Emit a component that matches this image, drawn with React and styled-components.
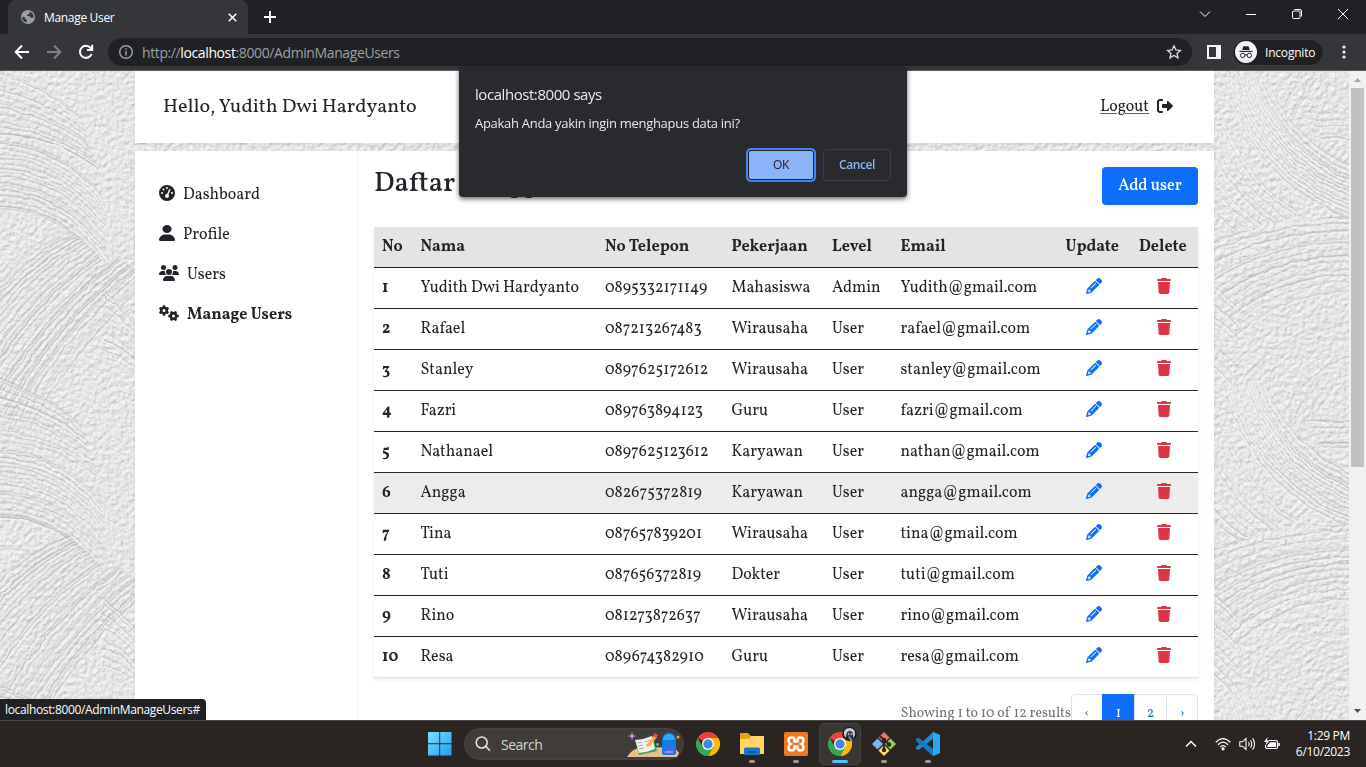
import React from 'react';
import styled, { createGlobalStyle, css } from 'styled-components';
import { FaGaugeHigh, FaUser, FaUsers, FaGears, FaPencil, FaTrash } from 'react-icons/fa6';

const serif = '"Vollkorn", "Liberation Serif", serif';
const sans = '"Segoe UI", "Open Sans", "Noto Sans", sans-serif';

const GlobalStyle = createGlobalStyle`
  *, *::before, *::after { box-sizing: border-box; }
  body { margin: 0; overflow: hidden; background: #202124; }
  svg { display: block; flex: none; }
`;

/* ---------- browser window ---------- */

const Desktop = styled.div`
  position: relative;
  width: 1366px;
  height: 767px;
  display: flex;
  flex-direction: column;
  overflow: hidden;
  font-family: ${sans};
`;

const TabStrip = styled.div`
  display: flex;
  align-items: flex-start;
  height: 34px;
  padding-left: 8px;
  background: #202124;
  color: #fff;
`;

const Tab = styled.div`
  display: flex;
  align-items: center;
  width: 240px;
  height: 34px;
  padding: 0 11px 0 13px;
  border-radius: 8px 8px 0 0;
  background: #35363a;
  font-size: 12px;
  letter-spacing: -0.32px;
`;

const TabTitle = styled.span`
  flex: 1;
  margin-left: 9px;
`;

const NewTab = styled.div`
  margin: 11px 0 0 16px;
`;

const WindowControls = styled.div`
  display: flex;
  align-items: center;
  gap: 34px;
  height: 28px;
  margin-left: auto;
  padding-right: 17px;
`;

const Toolbar = styled.div`
  display: flex;
  align-items: center;
  height: 37px;
  padding: 0 14px;
  background: #35363a;
  border-bottom: 1px solid #5b5960;
`;

const NavButtons = styled.div`
  display: flex;
  gap: 16px;
  width: 94px;
`;

const AddressBar = styled.div`
  display: flex;
  align-items: center;
  width: 1084px;
  height: 28px;
  padding: 0 10px;
  border-radius: 14px;
  background: #202124;
  color: #9aa0a6;
  font-size: 14px;
  letter-spacing: -0.39px;
`;

const Url = styled.span`
  flex: 1;
  margin-left: 8px;
  b { color: #fff; font-weight: 400; }
`;

const Incognito = styled.div`
  display: flex;
  align-items: center;
  gap: 8px;
  width: 92px;
  height: 27px;
  margin: 0 18px 0 11px;
  padding-left: 2px;
  border: 1px solid #3c3d41;
  border-radius: 14px;
  background: #202124;
  color: #fff;
  font-size: 12px;
  letter-spacing: -0.2px;
`;

const SidePanelIcon = styled.div`
  width: 14px;
  height: 14px;
  margin-left: 15px;
  border: 2px solid #f1f3f4;
  border-right-width: 5px;
`;

const Viewport = styled.div`
  position: relative;
  display: flex;
  height: 649px;
  overflow: hidden;
  background: #e3e3e3;
`;

const Wall = styled.svg`
  position: absolute;
  top: 0;
  left: 0;
`;

const Scrollbar = styled.div`
  position: relative;
  display: flex;
  flex-direction: column;
  align-items: center;
  justify-content: space-between;
  width: 17px;
  margin-left: auto;
  padding: 7px 0;
  background: #f1f1f1;
`;

const Thumb = styled.div`
  width: 13px;
  height: 379px;
  margin: 6px 0 auto;
  background: #c1c1c1;
`;

/* ---------- page ---------- */

const Page = styled.div`
  position: relative;
  display: flex;
  flex-direction: column;
  gap: 8px;
  width: 1079px;
  margin-left: 135px;
  font-family: ${serif};
  font-size: 16px;
  color: #212529;
`;

const Card = styled.section`
  display: flex;
  flex: none;
  background: #fff;
  box-shadow: 0 2px 4px rgba(0, 0, 0, 0.075);
`;

const Header = styled(Card)`
  align-items: center;
  justify-content: space-between;
  height: 72px;
  padding: 0 41px 0 28px;
`;

const Greeting = styled.span`
  font-size: 20px;
`;

const Logout = styled.span`
  display: flex;
  align-items: center;
  gap: 8px;
  svg { margin-bottom: 3px; }
  span {
    text-decoration: underline 1px #0d6efd;
    text-underline-offset: 2px;
  }
`;

const Body = styled(Card)`
  height: 600px;
`;

const Sidebar = styled.nav`
  display: flex;
  flex-direction: column;
  gap: 16px;
  width: 223px;
  padding: 32px 24px;
  border-right: 1px solid #f5f5f5;
`;

const NavItem = styled.div`
  display: flex;
  align-items: center;
  gap: 8px;
  height: 24px;
  font-weight: ${(p) => (p.$active ? 700 : 400)};
  svg { margin-bottom: 4px; }
`;

const Main = styled.main`
  flex: 1;
  padding: 16px 16px 0 16px;
`;

const TitleRow = styled.div`
  display: flex;
  justify-content: space-between;
  height: 60px;
`;

const Title = styled.h1`
  margin: 0;
  font-size: 28px;
  font-weight: 500;
  line-height: 34px;
`;

const AddButton = styled.button`
  width: 96px;
  height: 38px;
  padding: 0;
  border: 0;
  border-radius: 4px;
  background: #0d6efd;
  color: #fff;
  font-family: inherit;
  font-size: 16px;
  font-weight: 500;
`;

const Table = styled.div`
  box-shadow: 0 2px 4px rgba(0, 0, 0, 0.075);
  border-bottom: 1px solid #dee2e6;
`;

const Row = styled.div`
  display: grid;
  grid-template-columns: 38.5px 184.5px 126.5px 100.5px 68.5px 165px 73.5px 66px;
  align-items: center;
  height: 41px;
  border-bottom: 1px solid #212529;
  background: ${(p) => p.$bg || '#fff'};
  &:last-child { height: 40px; border-bottom: 0; }
`;

const HeadRow = styled(Row)`
  background: #e4e4e4;
  font-weight: 700;
`;

const Cell = styled.span`
  padding-left: 8px;
  white-space: nowrap;
  font-weight: ${(p) => (p.$bold ? 700 : 'inherit')};
`;

const IconCell = styled.span`
  display: flex;
  justify-content: center;
  padding-bottom: 5px;
  color: ${(p) => p.$color};
`;

const Footer = styled.div`
  display: flex;
  justify-content: flex-end;
  margin-top: 16px;
`;

const Summary = styled.span`
  margin-top: 10px;
  color: #6c757d;
  font-size: 14px;
`;

const Pager = styled.div`
  display: flex;
  height: 38px;
  border: 1px solid #dee2e6;
  border-radius: 4px;
`;

const PageLink = styled.span`
  display: flex;
  justify-content: center;
  width: ${(p) => p.$w}px;
  padding-top: 9px;
  border-left: 1px solid #dee2e6;
  color: #0d6efd;
  font-size: 14px;
  &:first-child { border-left: 0; color: #6c757d; }
  ${(p) => p.$active && css`
    margin: -1px 0;
    padding-top: 10px;
    border-color: #0d6efd;
    background: #0d6efd;
    color: #fff;
  `}
`;

/* ---------- overlays ---------- */

const Dialog = styled.div`
  position: absolute;
  top: 66px;
  left: 459px;
  display: flex;
  flex-direction: column;
  width: 448px;
  height: 131px;
  padding: 18px 16px 16px;
  border-radius: 4px;
  background: #292a2d;
  color: #e8eaed;
  box-shadow: 0 2px 5px rgba(0, 0, 0, 0.6);
`;

const DialogTitle = styled.div`
  font-size: 15px;
  line-height: 20px;
  letter-spacing: -0.44px;
`;

const DialogText = styled.div`
  margin-top: 11px;
  font-size: 13px;
  line-height: 17px;
  letter-spacing: -0.29px;
`;

const DialogActions = styled.div`
  display: flex;
  justify-content: flex-end;
  gap: 8px;
  margin-top: auto;
`;

const DialogButton = styled.button`
  width: 68px;
  height: 32px;
  padding: 0 0 1px;
  border: 1px solid #3c4043;
  border-radius: 4px;
  background: transparent;
  color: #8ab4f8;
  font: 600 12px ${sans};
  letter-spacing: -0.4px;
  ${(p) => p.$primary && css`
    width: 66px;
    height: 30px;
    margin: 1px;
    border-color: #202124;
    border-radius: 3px;
    background: #8ab4f8;
    color: #202124;
    font-weight: 400;
    box-shadow: 0 0 0 2px #4285f4;
  `}
`;

const StatusBubble = styled.div`
  position: absolute;
  left: 0;
  top: 699px;
  width: 206px;
  height: 21px;
  padding-left: 5px;
  border-radius: 0 4px 0 0;
  background: #202124;
  color: #fff;
  font-size: 12px;
  line-height: 22px;
  letter-spacing: -0.35px;
`;

/* ---------- taskbar ---------- */

const Taskbar = styled.div`
  display: flex;
  align-items: center;
  height: 47px;
  padding: 0 16px 0 428px;
  border-top: 1px solid #4a4644;
  background: #2a2523;
  color: #fff;
`;

const SearchBox = styled.div`
  display: flex;
  align-items: center;
  width: 220px;
  height: 32px;
  margin-left: 12px;
  padding: 0 2px 0 10px;
  border: 1px solid #474341;
  border-radius: 16px;
  background: #403c3a;
  color: #d4d2d1;
  font-size: 14px;
  letter-spacing: -0.5px;
  span { flex: 1; margin-left: 10px; }
`;

const Apps = styled.div`
  display: flex;
  gap: 4px;
  margin-left: 4px;
`;

const TaskApp = styled.div`
  position: relative;
  display: flex;
  flex-direction: column;
  align-items: center;
  width: 40px;
  height: 40px;
  padding-top: 8px;
  border-radius: 4px;
  ${(p) => p.$active && css`
    background: #3a3634;
    box-shadow: 0 0 0 1px #45413f;
  `}
  &::after {
    content: '';
    width: ${(p) => (p.$active ? 16 : 6)}px;
    height: 3px;
    margin-top: 4px;
    border-radius: 2px;
    background: ${(p) => (p.$active ? '#4cc2ff' : p.$running ? '#9b9896' : 'transparent')};
  }
`;

const Avatar = styled.svg`
  position: absolute;
  top: 2px;
  right: 3px;
`;

const Tray = styled.div`
  display: flex;
  align-items: center;
  gap: 8px;
  margin-left: auto;
`;

const TrayChevron = styled.div`
  margin-right: 10px;
`;

const Clock = styled.div`
  width: 62px;
  text-align: right;
  font-size: 12px;
  line-height: 16px;
  letter-spacing: -0.3px;
  white-space: nowrap;
`;

/* ---------- drawings ---------- */

function range(n) {
  return Array.from({ length: n }, (_, i) => i);
}

function wobble(i, k) {
  const v = Math.sin(i * 12.9898 + k * 78.233) * 43758.5453;
  return v - Math.floor(v);
}

/* Each swath is a fan of brush strokes between two guide curves, and the plaster pattern repeats every 308px. */
const TILE = 308;

const tileSwaths = [
  { clip: '0,290 75,310 104,420 104,440 0,385', a: [-10, 300, 50, 322, 78, 350], b: [-10, 375, 50, 372, 100, 410], n: 11 },
  { clip: '0,370 80,365 107,420 107,505 70,470 0,450', a: [-10, 375, 60, 375, 102, 430], b: [-10, 450, 60, 445, 108, 515], n: 16 },
  { clip: '0,450 70,465 106,500 135,480 135,600 0,680', a: [-30, 540, 20, 480, 75, 462], b: [20, 690, 70, 590, 150, 520], n: 25 },
  { clip: '60,295 135,300 135,485 106,500', a: [55, 290, 100, 370, 106, 505], b: [120, 290, 150, 390, 150, 500], n: 11, faint: true },
  { clip: '104,500 135,530 135,606 104,606', a: [100, 520, 120, 535, 140, 560], b: [100, 600, 120, 602, 140, 620], n: 9 },
  { clip: '1222,5 1260,5 1350,85 1350,145 1300,148 1240,60', a: [1258, -10, 1285, 70, 1360, 98], b: [1218, 0, 1245, 115, 1360, 155], n: 13 },
  { clip: '1214,0 1225,50 1300,140 1290,148 1214,165', a: [1222, 40, 1250, 110, 1315, 150], b: [1205, 140, 1220, 160, 1250, 168], n: 9 },
  { clip: '1262,0 1350,0 1350,85 1300,60', a: [1270, 60, 1290, 20, 1310, -20], b: [1320, 70, 1350, 40, 1370, 10], n: 8, faint: true },
  { clip: '1305,40 1350,40 1350,80 1325,75', a: [1300, 40, 1330, 42, 1360, 42], b: [1300, 75, 1330, 70, 1360, 74], n: 5 },
  { clip: '1214,165 1350,142 1350,225 1235,272 1214,205', a: [1205, 172, 1270, 142, 1360, 144], b: [1222, 285, 1270, 222, 1360, 222], n: 12 },
  { clip: '1235,270 1350,225 1350,330 1290,350 1232,310', a: [1232, 290, 1290, 230, 1360, 240], b: [1290, 370, 1300, 320, 1360, 290], n: 8, faint: true },
  { clip: '1214,205 1238,230 1240,335 1214,310', a: [1205, 205, 1225, 215, 1240, 235], b: [1205, 295, 1225, 312, 1240, 330], n: 9 },
];

const gapSwath = { clip: '135,65 1214,65 1214,85 135,85', a: [100, 20, 500, 40, 900, 80], b: [400, 60, 900, 80, 1260, 120], n: 30 };

const shift = (s, dy) => ({
  ...s,
  clip: s.clip.split(' ').map((p) => { const [x, y] = p.split(','); return `${x},${+y + dy}`; }).join(' '),
  a: s.a.map((v, k) => (k % 2 ? v + dy : v)),
  b: s.b.map((v, k) => (k % 2 ? v + dy : v)),
});

const swaths = [
  ...[-TILE, 0, TILE, 2 * TILE].flatMap((dy) => tileSwaths.map((s) => shift(s, dy))),
  gapSwath,
];

function strokePath(s, i) {
  const t = (i + wobble(i, s.n) * 0.7) / s.n;
  const p = s.a.map((v, k) => (v + (s.b[k] - v) * t).toFixed(1));
  return `M${p[0]} ${p[1]}Q${p[2]} ${p[3]} ${p[4]} ${p[5]}`;
}

function Plaster() {
  return (
    <Wall width="1350" height="649" viewBox="0 0 1350 649">
      <defs>
        <filter id="grain" x="0" y="0" width="100%" height="100%" colorInterpolationFilters="sRGB">
          <feTurbulence type="fractalNoise" baseFrequency="0.22" numOctaves="3" seed="7" result="n" />
          <feDiffuseLighting in="n" surfaceScale="0.8" lightingColor="#f9f9f9">
            <feDistantLight azimuth="240" elevation="68" />
          </feDiffuseLighting>
        </filter>
        <filter id="rough" x="0" y="0" width="1350" height="649" filterUnits="userSpaceOnUse">
          <feTurbulence type="fractalNoise" baseFrequency="0.07" numOctaves="2" seed="3" />
          <feDisplacementMap in="SourceGraphic" scale="4" xChannelSelector="R" yChannelSelector="G" />
        </filter>
        {swaths.map((s, i) => (
          <clipPath id={`swath${i}`} key={i}><polygon points={s.clip} /></clipPath>
        ))}
      </defs>
      <rect width="1350" height="649" filter="url(#grain)" />
      <g filter="url(#rough)" fill="none">
        {swaths.map((s, i) => (
          <g key={i} clipPath={`url(#swath${i})`} opacity={s.faint ? 0.4 : 0.9}>
            {range(s.n).map((j) => (
              <g key={j} opacity={0.35 + wobble(j, i) * 0.5}>
                <path d={strokePath(s, j)} stroke="#cfcfcf" strokeWidth={2 + wobble(j, i + 2) * 2} opacity="0.5" />
                <path d={strokePath(s, j)} stroke="#b4b4b4" strokeWidth={0.8 + wobble(j, i + 5) * 0.8} />
                <path d={strokePath(s, j)} stroke="#f4f4f4" strokeWidth="1.8" transform="translate(0.6 2)" />
              </g>
            ))}
          </g>
        ))}
      </g>
    </Wall>
  );
}

function LogoutIcon() {
  return (
    <svg width="16" height="16" viewBox="0 0 512 512" fill="currentColor">
      <path d="M96 480h64C177.7 480 192 465.7 192 448S177.7 416 160 416H96c-17.67 0-32-14.33-32-32V128c0-17.67 14.33-32 32-32h64C177.7 96 192 81.67 192 64S177.7 32 160 32H96C42.98 32 0 74.98 0 128v256C0 437 42.98 480 96 480z" />
      <path d="M504.8 238.5l-144.1-136c-6.975-6.578-17.2-8.375-26-4.594c-8.803 3.797-14.51 12.47-14.51 22.05l-.0918 72l-128-.001c-17.69 0-32.02 14.33-32.02 32v64c0 17.67 14.34 32 32.02 32l128 .001l.0918 71.1c0 9.578 5.707 18.25 14.51 22.05c8.803 3.781 19.03 1.984 26-4.594l144.1-136C514.4 264.4 514.4 247.6 504.8 238.5z" />
    </svg>
  );
}

function ChromeLogo() {
  return (
    <svg width="24" height="24" viewBox="0 0 24 24">
      <path d="M12 12 1.6 6A12 12 0 0 1 22.4 6Z" fill="#ea4335" />
      <path d="M12 6H22.4A12 12 0 0 1 12 24L17.2 15Z" fill="#fbbc04" />
      <path d="M1.6 6 6.8 15 12 18 17.2 15 12 24A12 12 0 0 1 1.6 6Z" fill="#34a853" />
      <circle cx="12" cy="12" r="6" fill="#fff" />
      <circle cx="12" cy="12" r="4.7" fill="#4285f4" />
    </svg>
  );
}

function Globe() {
  return (
    <svg width="14" height="14" viewBox="0 0 14 14">
      <circle cx="7" cy="7" r="7" fill="#9aa0a6" />
      <path d="M7.6 1.3 9 2.2 8.4 3.8 6.4 4.4 6 6 8.8 6.2 9.6 7.8 12.6 7.4A5.8 5.8 0 0 0 7.6 1.3ZM1.3 6.4 4 7.6 4.2 9 6 9.8 5.6 12.6A5.8 5.8 0 0 1 1.3 6.4Z" fill="#35363a" />
    </svg>
  );
}

function Line({ w = 14, h = 14, d, color = '#fff', sw = 1 }) {
  return (
    <svg width={w} height={h} viewBox={`0 0 ${w} ${h}`} fill="none" stroke={color} strokeWidth={sw}>
      <path d={d} />
    </svg>
  );
}

function IncognitoIcon() {
  return (
    <svg width="22" height="22" viewBox="0 0 22 22">
      <circle cx="11" cy="11" r="11" fill="#f1f3f4" />
      <path d="M7.2 9 8.6 4.9 11 5.6 13.4 4.9 14.8 9Z" fill="#202124" />
      <path d="M4.5 10.4H17.5" stroke="#202124" strokeWidth="1.1" />
      <g fill="none" stroke="#202124"><circle cx="7.7" cy="14.4" r="2.2" /><circle cx="14.3" cy="14.4" r="2.2" /><path d="M9.9 14.2Q11 13.4 12.1 14.2" /></g>
    </svg>
  );
}

function SchoolArt() {
  return (
    <svg width="54" height="26" viewBox="0 0 54 26">
      <path d="M0 26Q5 18 12 17L42 16Q50 18 52 22L50 26Z" fill="#e8c08e" />
      <path d="M9 10 26 6 30 20 12 24Z" fill="#3f9b57" />
      <path d="M8 9 16 8 19 21 12 22ZM16 8 25 5 28 18 19 21Z" fill="#f4f1ea" />
      <path d="M10 12 15 11M11 15 16 14M12 18 17 17M18 11 23 9M19 14 24 12" stroke="#8a94a5" strokeWidth=".8" />
      <path d="M20 14 27 4 30 6 23 15 20 16Z" fill="#ffb13b" /><path d="M26 5 28 2 31 4 29 7Z" fill="#e8513f" />
      <path d="M5 1 6 4 9 5 6 6 5 9 4 6 1 5 4 4Z" fill="#d68cf5" />
      <path d="M35 10Q35 2 42 2Q49 2 49 10V22Q49 24 46 24H38Q35 24 35 22Z" fill="#0b7fe0" />
      <path d="M36 9Q37 3 42 3Q47 3 48 9Z" fill="#35a7ff" /><rect x="36" y="15" width="12" height="8" rx="3" fill="#3b6cf0" />
      <path d="M40 2Q42-1 44 2" stroke="#0b5cb0" fill="none" /><path d="M38 21H46" stroke="#b57bf0" strokeWidth="2" />
      <circle cx="51" cy="6" r="1.5" fill="#f5a623" /><circle cx="30.5" cy="13.5" r="1.4" fill="#55c7cf" />
    </svg>
  );
}

const users = [
  ['Yudith Dwi Hardyanto', '0895332171149', 'Mahasiswa', 'Admin', 'Yudith@gmail.com'],
  ['Rafael', '087213267483', 'Wirausaha', 'User', 'rafael@gmail.com'],
  ['Stanley', '0897625172612', 'Wirausaha', 'User', 'stanley@gmail.com'],
  ['Fazri', '089763894123', 'Guru', 'User', 'fazri@gmail.com'],
  ['Nathanael', '0897625123612', 'Karyawan', 'User', 'nathan@gmail.com'],
  ['Angga', '082675372819', 'Karyawan', 'User', 'angga@gmail.com'],
  ['Tina', '087657839201', 'Wirausaha', 'User', 'tina@gmail.com'],
  ['Tuti', '087656372819', 'Dokter', 'User', 'tuti@gmail.com'],
  ['Rino', '081273872637', 'Wirausaha', 'User', 'rino@gmail.com'],
  ['Resa', '089674382910', 'Guru', 'User', 'resa@gmail.com'],
];

const headings = ['No', 'Nama', 'No Telepon', 'Pekerjaan', 'Level', 'Email', 'Update', 'Delete'];

function UserTable() {
  return (
    <Table>
      <HeadRow>{headings.map((h) => <Cell key={h}>{h}</Cell>)}</HeadRow>
      {users.map((u, i) => (
        <Row key={u[4]} $bg={i === 5 ? '#ececec' : undefined}>
          <Cell $bold>{i + 1}</Cell>
          {u.map((v, k) => <Cell key={k}>{v}</Cell>)}
          <IconCell $color="#0d6efd"><FaPencil size={16} /></IconCell>
          <IconCell $color="#dc3545"><FaTrash size={16} /></IconCell>
        </Row>
      ))}
    </Table>
  );
}

export default function App() {
  return (
    <Desktop>
      <GlobalStyle />
      <TabStrip>
        <Tab>
          <Globe />
          <TabTitle>Manage User</TabTitle>
          <Line w={9} h={9} d="M.7.7 8.3 8.3M8.3.7.7 8.3" sw={1.5} />
        </Tab>
        <NewTab><Line w={12} h={12} d="M6 0V12M0 6H12" sw={2} /></NewTab>
        <WindowControls>
          <Line w={12} h={8} d="M1 1.5 6 6.5 11 1.5" />
          <Line w={12} h={12} d="M1 6.5H11" />
          <Line w={12} h={12} d="M1.5 4Q1.5 3 2.5 3H8Q9 3 9 4V9.5Q9 10.5 8 10.5H2.5Q1.5 10.5 1.5 9.5ZM3.5 1.5H9Q10.5 1.5 10.5 3V8.5" />
          <Line w={12} h={12} d="M1 1 11 11M11 1 1 11" />
        </WindowControls>
      </TabStrip>
      <Toolbar>
        <NavButtons>
          <Line w={16} h={16} d="M15 8H2M8 1.5 1.7 8 8 14.5" sw={2} />
          <Line w={16} h={16} d="M1 8H14M8 1.5 14.3 8 8 14.5" sw={2} color="#7f8184" />
          <Line w={16} h={16} d="M13.6 10A6 6 0 1 1 12.6 4L14 5.5M14.2.8V6H9" sw={2} />
        </NavButtons>
        <AddressBar>
          <svg width="16" height="16" viewBox="0 0 16 16" fill="none" stroke="#9aa0a6" strokeWidth="1.5">
            <circle cx="8" cy="8" r="6.3" /><path d="M8 7V11.5M8 4.3V5.8" />
          </svg>
          <Url>http://<b>localhost</b>:8000/AdminManageUsers</Url>
          <Line w={16} h={16} d="M8 1.8 9.9 6 14.4 6.4 11 9.4 12 13.9 8 11.5 4 13.9 5 9.4 1.6 6.4 6.1 6Z" color="#dcdee0" sw={1.3} />
        </AddressBar>
        <SidePanelIcon />
        <Incognito><IncognitoIcon />Incognito</Incognito>
        <svg width="4" height="14" viewBox="0 0 4 14" fill="#f1f3f4"><circle cx="2" cy="2" r="1.6" /><circle cx="2" cy="7" r="1.6" /><circle cx="2" cy="12" r="1.6" /></svg>
      </Toolbar>

      <Viewport>
        <Plaster />
        <Page>
          <Header>
            <Greeting>Hello, Yudith Dwi Hardyanto</Greeting>
            <Logout><span>Logout</span><LogoutIcon /></Logout>
          </Header>
          <Body>
            <Sidebar>
              <NavItem><FaGaugeHigh size={16} />Dashboard</NavItem>
              <NavItem><FaUser size={16} preserveAspectRatio="none" />Profile</NavItem>
              <NavItem><FaUsers size={20} />Users</NavItem>
              <NavItem $active><FaGears size={20} />Manage Users</NavItem>
            </Sidebar>
            <Main>
              <TitleRow>
                <Title>Daftar Pengguna</Title>
                <AddButton>Add user</AddButton>
              </TitleRow>
              <UserTable />
              <Footer>
                <Summary>Showing 1 to 10 of 12 results</Summary>
                <Pager>
                  <PageLink $w={30}>‹</PageLink>
                  <PageLink $w={32} $active>1</PageLink>
                  <PageLink $w={32}>2</PageLink>
                  <PageLink $w={31}>›</PageLink>
                </Pager>
              </Footer>
            </Main>
          </Body>
        </Page>
        <Scrollbar>
          <svg width="7" height="4" viewBox="0 0 7 4"><path d="M0 4 3.5 0 7 4Z" fill="#a3a3a3" /></svg>
          <Thumb />
          <svg width="7" height="4" viewBox="0 0 7 4"><path d="M0 0H7L3.5 4Z" fill="#505050" /></svg>
        </Scrollbar>
      </Viewport>

      <Taskbar>
        <svg width="24" height="24" viewBox="0 0 24 24">
          <defs><linearGradient id="win" x1="0" y1="0" x2="1" y2="1"><stop stopColor="#7ee0ff" /><stop offset="1" stopColor="#1a9ff5" /></linearGradient></defs>
          <path d="M0 0H11.3V11.3H0ZM12.2 0H23.500V11.3H12.2ZM0 12.2H11.3V23.500H0ZM12.2 12.2H23.500V23.500H12.2Z" fill="url(#win)" />
        </svg>
        <SearchBox>
          <Line w={16} h={16} d="M11.2 10.8 15 14.8M1.2 6.5A5.5 5.5 0 1 0 12.2 6.5A5.5 5.5 0 1 0 1.2 6.5" color="#e3e1e0" sw={1.6} />
          <span>Search</span>
          <SchoolArt />
        </SearchBox>
        <Apps>
          <TaskApp><ChromeLogo /></TaskApp>
          <TaskApp $running>
            <svg width="24" height="24" viewBox="0 0 24 24">
              <path d="M0 2Q0 1 1 1H8L11 4H23Q24 4 24 5V21Q24 22 23 22H1Q0 22 0 21Z" fill="#e5a50f" />
              <path d="M0 7H9L11 4H23Q24 4 24 5V21Q24 22 23 22H1Q0 22 0 21Z" fill="#ffd767" />
              <path d="M4 23V17Q4 15.5 5.5 15.5H18.5Q20 15.5 20 17V23Z" fill="#1676c9" /><path d="M8 20H16" stroke="#0c559c" strokeWidth="2" />
            </svg>
          </TaskApp>
          <TaskApp $running>
            <svg width="24" height="24" viewBox="0 0 24 24">
              <rect width="24" height="24" rx="2" fill="#ee7724" />
              <path d="M7.5 5.5H8Q10.5 5.5 10.5 8.5V9.5H13.5V8.5Q13.5 5.5 16.5 5.5Q19.5 5.5 19.5 8.5Q19.5 11 17.5 12Q19.5 13 19.5 15.5Q19.5 18.5 16.5 18.5Q13.5 18.5 13.5 15.5V14.5H10.5V15.5Q10.5 18.5 7.5 18.5Q4.5 18.5 4.5 15.5Q4.5 13 6.5 12Q4.5 11 4.5 8.5Q4.5 5.5 7.5 5.5Z" fill="none" stroke="#fff" strokeWidth="2.4" />
            </svg>
          </TaskApp>
          <TaskApp $active>
            <ChromeLogo />
            <Avatar width="15" height="16" viewBox="0 0 15 16">
              <circle cx="7.5" cy="8" r="7.2" fill="#191b20" /><path d="M2 9Q1 2 8 2Q14 3 13 9L11 13Q12 5 8 5Q4 5 4 12Z" fill="#c9ced8" />
              <circle cx="8" cy="8.5" r="3" fill="#40434b" /><path d="M6 8H7.5M9 8H10.5" stroke="#fff" /><path d="M7 11 10 15" stroke="#8e96a5" strokeWidth="2" />
            </Avatar>
          </TaskApp>
          <TaskApp $running>
            <svg width="24" height="24" viewBox="0 0 24 24">
              <path d="M12 0 17.5 5.5 12 11 6.5 5.5Z" fill="#f2706b" /><path d="M5.5 6.5 11 12 5.5 17.5 0 12Z" fill="#7fb0f5" />
              <path d="M18.5 6.5 24 12 18.5 17.5 13 12Z" fill="#8fd14f" /><path d="M12 13 17.5 18.5 12 24 6.5 18.5Z" fill="#ffe066" />
              <path d="M8 4 12 8V18M12 8 17 12" stroke="#2b2523" strokeWidth="1.8" fill="none" />
              <g fill="#2b2523"><circle cx="12" cy="8" r="2.2" /><circle cx="17" cy="12.5" r="2.2" /><circle cx="12" cy="18" r="2.2" /></g>
            </svg>
          </TaskApp>
          <TaskApp $running>
            <svg width="24" height="24" viewBox="0 0 24 24">
              <path d="M17 0 24 3V21L17 24 7 14.5 2.5 18 0 16.7V15L4 12 0 9V7.3L2.5 6 7 9.5ZM17 6.8 10.5 12 17 17.2Z" fill="#1f8ad2" fillRule="evenodd" />
              <path d="M0 7.3 2.5 6 17 17.2V24L0 9Z" fill="#0f7cc6" /><path d="M17 0 24 3V21L17 24Z" fill="#2ba6ef" />
            </svg>
          </TaskApp>
        </Apps>
        <Tray>
          <TrayChevron><Line w={12} h={8} d="M1 6.5 6 1.5 11 6.5" sw={1.5} /></TrayChevron>
          <svg width="16" height="14" viewBox="0 0 16 14" fill="none" stroke="#fff" strokeWidth="1.3">
            <path d="M.8 5.2Q8-2 15.2 5.2M3 7.7Q8 2.7 13 7.7M5.2 10Q8 7.2 10.8 10" /><circle cx="8" cy="11.8" r="1" fill="#fff" />
          </svg>
          <Line w={17} h={14} d="M.8 4.8H3.5L7 1.5V12.5L3.5 9.2H.8ZM9.5 5Q10.8 7 9.5 9M11.5 3.2Q14 7 11.5 10.8M13.6 1.4Q17.5 7 13.6 12.6" sw={1.1} />
          <svg width="16" height="14" viewBox="0 0 16 14">
            <path d="M5 3.5H12Q13.5 3.5 13.5 5V10Q13.5 11.5 12 11.5H3Q1.5 11.5 1.5 10V8" fill="none" stroke="#fff" strokeWidth="1.2" />
            <path d="M6 5.2H12V10H3.3V8.5ZM14.3 6H15.8V9H14.3ZM3.5 0 0 5H2.5L1.5 8.5 5.5 3.6H3Z" fill="#fff" />
          </svg>
          <Clock>1:29 PM<br />6/10/2023</Clock>
        </Tray>
      </Taskbar>

      <StatusBubble>localhost:8000/AdminManageUsers#</StatusBubble>
      <Dialog role="dialog">
        <DialogTitle>localhost:8000 says</DialogTitle>
        <DialogText>Apakah Anda yakin ingin menghapus data ini?</DialogText>
        <DialogActions>
          <DialogButton $primary>OK</DialogButton>
          <DialogButton>Cancel</DialogButton>
        </DialogActions>
      </Dialog>
    </Desktop>
  );
}
